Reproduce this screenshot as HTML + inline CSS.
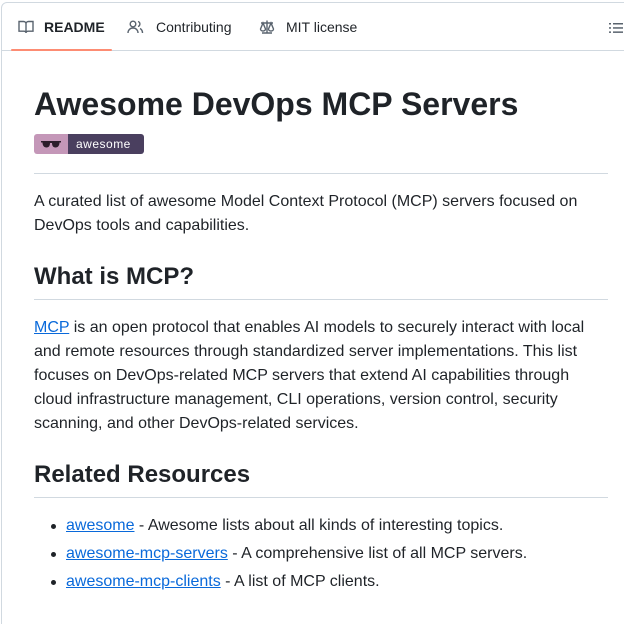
<!DOCTYPE html>
<html><head><style>
*{box-sizing:border-box;margin:0;padding:0}
html,body{width:624px;height:624px;overflow:hidden}
body{background:#fff;font-family:"Liberation Sans",Arial,sans-serif;color:#1f2328;position:relative}
.box{position:absolute;left:1px;top:2px;width:640px;height:660px;border:1px solid #d1d9e0;border-radius:6px}
.tabs{position:absolute;left:0;top:0;width:640px;height:48px;border-bottom:1px solid #d1d9e0}
.tab{position:absolute;top:16px;font-size:14px;color:#1f2328;display:flex;align-items:center;gap:10px}
.ul{position:absolute;left:9px;top:46px;width:101px;height:2px;background:#fd8c73;border-radius:2px}
h1{position:absolute;left:34px;top:84px;font-size:32px;font-weight:bold;line-height:40px}
h2{position:absolute;left:34px;font-size:24px;font-weight:bold;line-height:30px}
.hr{position:absolute;left:34px;width:574px;height:1px;background:#d1d9e0}
p{position:absolute;left:34px;width:574px;font-size:16px;line-height:24px}
a{color:#0969da;text-decoration:underline}
.li{position:absolute;left:66px;font-size:16px;line-height:24px;white-space:nowrap}
.li:before{content:"";position:absolute;left:-15px;top:10px;width:5px;height:5px;border-radius:50%;background:#1f2328}
</style></head><body>
<div class="box">
<div class="tabs">
<div class="tab" style="left:16px;font-weight:bold"><svg width="16" height="16" viewBox="0 0 16 16" fill="none" stroke="#59636e" stroke-width="1.4"><path d="M1 2.5h4.5c1.4 0 2.5 1 2.5 2.3V14c0-1-1-1.8-2.2-1.8H1z M15 2.5h-4.5C9.1 2.5 8 3.5 8 4.8V14c0-1 1-1.8 2.2-1.8H15z"/></svg>README</div>
<div class="tab" style="left:125px;gap:12px"><svg width="17" height="16" viewBox="0 0 17 16" fill="none" stroke="#59636e" stroke-width="1.4"><circle cx="6" cy="5" r="2.8"/><path d="M1 14c0-3 2.2-5 5-5s5 2 5 5M11 2.5a2.6 2.6 0 0 1 0 5M13 9.5c1.5.8 2.5 2.4 2.5 4.5"/></svg>Contributing</div>
<div class="tab" style="left:257px;gap:11px"><svg width="16" height="16" viewBox="0 0 16 16" fill="none" stroke="#59636e" stroke-width="1.4"><path d="M8 1.5v12M3 14h10M2 4h12M4 4l-2.5 6a2.5 2 0 0 0 5 0zM12 4l-2.5 6a2.5 2 0 0 0 5 0z"/></svg>MIT license</div>
<svg style="position:absolute;left:606px;top:17px" width="16" height="16" viewBox="0 0 16 16" fill="#59636e"><rect x="1" y="3" width="2" height="1.5"/><rect x="5" y="3" width="10" height="1.5"/><rect x="1" y="7.2" width="2" height="1.5"/><rect x="5" y="7.2" width="10" height="1.5"/><rect x="1" y="11.4" width="2" height="1.5"/><rect x="5" y="11.4" width="10" height="1.5"/></svg>
<div class="ul"></div>
</div>
</div>
<h1>Awesome DevOps MCP Servers</h1>
<div style="position:absolute;left:34px;top:134px;width:110px;height:20px;border-radius:3px;overflow:hidden;display:flex">
<div style="width:34px;background:#c497b8;display:flex;align-items:center;justify-content:center"><svg width="20" height="9" viewBox="0 0 20 9"><path d="M0 1h20v1.5h-1.5c0 3-1.5 5-4 5s-3.5-2-3.5-4.5H9C9 5.5 8 7.5 5.5 7.5S1.5 5.5 1.5 2.5H0z" fill="#2b1c2a"/></svg></div>
<div style="flex:1;background:#4a3f5f;color:#fff;font-size:12px;line-height:20px;padding-left:8px;letter-spacing:.5px">awesome</div>
</div>
<div class="hr" style="top:173px"></div>
<p style="top:190px">A curated list of awesome Model Context Protocol (MCP) servers focused on DevOps tools and capabilities.</p>
<h2 style="top:262px">What is MCP?</h2>
<div class="hr" style="top:299px"></div>
<p style="top:316px"><a>MCP</a> is an open protocol that enables AI models to securely interact with local and remote resources through standardized server implementations. This list focuses on DevOps-related MCP servers that extend AI capabilities through cloud infrastructure management, CLI operations, version control, security scanning, and other DevOps-related services.</p>
<h2 style="top:460px">Related Resources</h2>
<div class="hr" style="top:497px"></div>
<div class="li" style="top:514px"><a>awesome</a> - Awesome lists about all kinds of interesting topics.</div>
<div class="li" style="top:542px"><a>awesome-mcp-servers</a> - A comprehensive list of all MCP servers.</div>
<div class="li" style="top:570px"><a>awesome-mcp-clients</a> - A list of MCP clients.</div>
</body></html>
